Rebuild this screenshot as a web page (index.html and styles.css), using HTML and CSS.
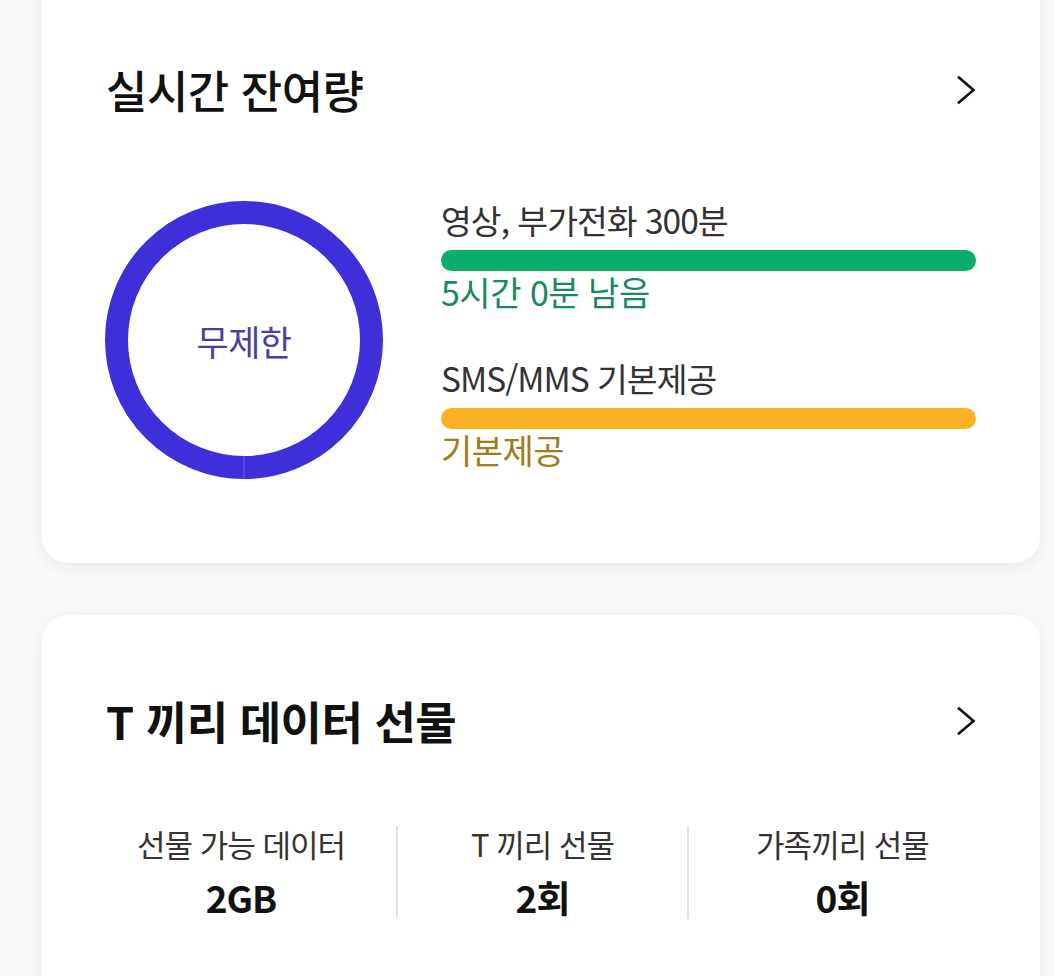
FILE: index.html
```html
<!DOCTYPE html>
<html lang="ko">
<head>
<meta charset="utf-8">
<link rel="stylesheet" href="styles.css">
</head>
<body>
<main class="page">
  <section class="card card-usage">
    <header class="card-head">
      <h2 class="card-title">실시간 잔여량</h2>
      <svg class="chev" viewBox="0 0 20 30" width="20" height="30"><path d="M3 2.5 L17.5 15 L3 27.5" fill="none" stroke="#111" stroke-width="2.6" stroke-linecap="square"/></svg>
    </header>
    <div class="usage">
      <div class="ring">
        <svg viewBox="0 0 278 278" width="278" height="278">
          <circle cx="139" cy="139" r="127.5" fill="none" stroke="#3f2fdb" stroke-width="23"/>
          <line x1="139" y1="255" x2="139" y2="278" stroke="#6a5ee6" stroke-width="1"/>
        </svg>
        <span class="ring-label">무제한</span>
      </div>
      <div class="bars">
        <div class="bar-item">
          <div class="bar-name">영상, 부가전화 300분</div>
          <div class="bar bar-green"></div>
          <div class="bar-value green">5시간 0분 남음</div>
        </div>
        <div class="bar-item">
          <div class="bar-name">SMS/MMS 기본제공</div>
          <div class="bar bar-yellow"></div>
          <div class="bar-value yellow">기본제공</div>
        </div>
      </div>
    </div>
  </section>

  <section class="card card-gift">
    <header class="card-head">
      <h2 class="card-title bold">T 끼리 데이터 선물</h2>
      <svg class="chev" viewBox="0 0 20 30" width="20" height="30"><path d="M3 2.5 L17.5 15 L3 27.5" fill="none" stroke="#111" stroke-width="2.6" stroke-linecap="square"/></svg>
    </header>
    <div class="stats">
      <div class="stat">
        <div class="stat-label">선물 가능 데이터</div>
        <div class="stat-value">2GB</div>
      </div>
      <div class="stat">
        <div class="stat-label">T 끼리 선물</div>
        <div class="stat-value">2회</div>
      </div>
      <div class="stat">
        <div class="stat-label">가족끼리 선물</div>
        <div class="stat-value">0회</div>
      </div>
    </div>
  </section>
</main>
</body>
</html>
```
FILE: styles.css
```css
* { box-sizing: border-box; margin: 0; padding: 0; }
html, body { background: #fafafa; }
body {
  font-family: "Noto Sans CJK KR", "Noto Sans", sans-serif;
  color: #222;
  overflow: hidden;
}
.page {
  padding: 0 14px 0 42px;
  display: flex;
  flex-direction: column;
  gap: 52px;
}
.card {
  background: #fff;
  border-radius: 26px;
  box-shadow: 0 4px 18px rgba(0,0,0,0.07);
  padding: 0 64px;
}
.card-usage {
  margin-top: -40px;
  padding-top: 102px;
  padding-bottom: 84px;
}
.card-gift {
  padding-top: 78px;
  height: 500px;
}
.card-head {
  display: flex;
  align-items: center;
  justify-content: space-between;
}
.card-title {
  font-size: 45px;
  font-weight: 500;
  line-height: 56px;
  color: #111;
  letter-spacing: -0.5px;
}
.card-title.bold { font-weight: 700; }
.usage {
  display: flex;
  gap: 58px;
  margin-top: 83px;
  margin-left: -1px;
}
.ring {
  position: relative;
  width: 278px;
  height: 278px;
  flex: none;
}
.ring svg { display: block; }
.ring-label {
  position: absolute;
  inset: 0;
  display: flex;
  align-items: center;
  justify-content: center;
  font-size: 35px;
  color: #4a3ea0;
  letter-spacing: -0.5px;
}
.bars {
  flex: 1;
  display: flex;
  flex-direction: column;
  gap: 44px;
  margin-top: -2px;
}
.bar-name {
  font-size: 33.5px;
  line-height: 42px;
  color: #333;
  letter-spacing: -1px;
}
.bar {
  height: 21px;
  border-radius: 11px;
  margin-top: 9px;
}
.bar-green { background: #0bad6c; }
.bar-yellow { background: #fbb124; }
.bar-value {
  font-size: 34px;
  line-height: 42px;
  letter-spacing: -0.5px;
  margin-top: 0;
}
.green { color: #168a5c; }
.yellow { color: #a07b1a; }
.stats {
  display: grid;
  grid-template-columns: 310px 291px 309px;
  margin: 77px -20px 0 -20px;
}
.stat {
  text-align: center;
}
.stat + .stat { border-left: 2px solid #e2e2e2; }
.stat-label {
  font-size: 31px;
  line-height: 36px;
  color: #333;
  letter-spacing: -1px;
}
.stat-value {
  font-size: 37px;
  line-height: 44px;
  font-weight: 700;
  color: #111;
  margin-top: 13px;
  letter-spacing: -1px;
}
```
